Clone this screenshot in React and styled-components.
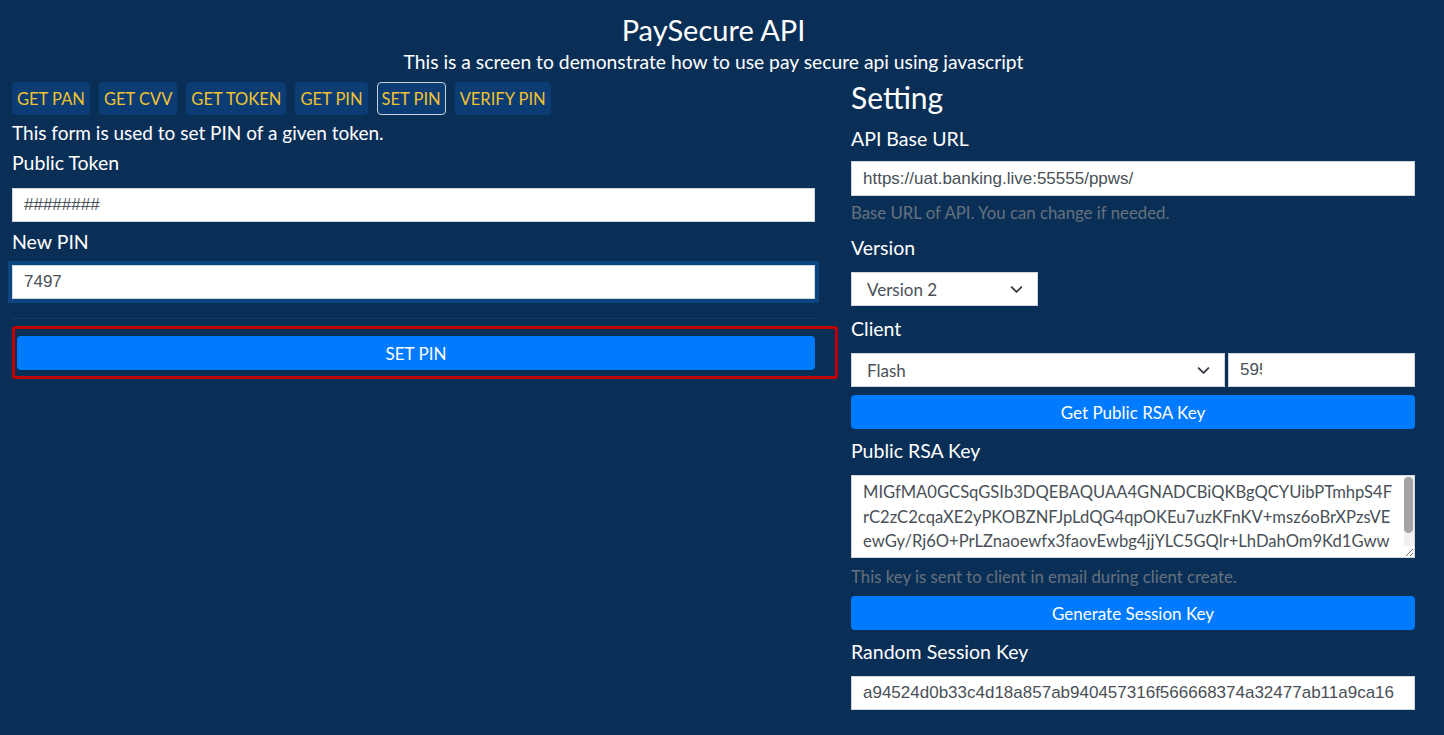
import styled, { createGlobalStyle } from 'styled-components';

const GlobalStyle = createGlobalStyle`
  html, body {
    margin: 0;
    background: #0a2f57;
  }
  body {
    color: #ffffff;
    font-family: Lato, "Noto Sans", sans-serif;
    font-size: 19px;
  }
  * { box-sizing: border-box; }
`

const Page = styled.div`
  min-height: 735px;
  background: #0a2f57;
  padding: 12px 29px 0 12px;
`

const Header = styled.header`
  text-align: center;
`

const Title = styled.h1`
  margin: 0;
  font-size: 29px;
  font-weight: 400;
  line-height: 36px;
`

const Subtitle = styled.p`
  margin: 2px 0 8px;
  font-size: 19.3px;
  line-height: 24px;
`

const Columns = styled.main`
  display: grid;
  grid-template-columns: 803px 1fr;
  column-gap: 36px;
  align-items: start;
`

const Column = styled.section`
  display: flex;
  flex-direction: column;
`

const Tabs = styled.nav`
  display: flex;
  gap: 9px;
`

const Tab = styled.button`
  height: 33px;
  padding: 0 4px;
  border: 1px solid ${p => (p.$active ? '#c9d2dd' : 'transparent')};
  border-radius: 4px;
  background: #0b3d74;
  color: #f1c232;
  font-family: Lato, "Noto Sans", sans-serif;
  font-size: 16.5px;
  cursor: pointer;
`

const Description = styled.p`
  margin: 6px 0 6px;
  line-height: 24px;
`

const Label = styled.label`
  display: block;
  margin-bottom: ${p => p.$mb ?? 11}px;
  font-size: 19.5px;
  line-height: 24px;
`

const TextInput = styled.input`
  display: block;
  width: ${p => p.$w ?? '100%'};
  height: ${p => p.$h ?? 34}px;
  margin-bottom: ${p => p.$mb ?? 11}px;
  padding: 0 ${p => p.$pr ?? 11}px 0 11px;
  border: 1px solid #cfd6de;
  border-radius: 0;
  background: #ffffff;
  color: #495057;
  font-family: "Liberation Sans", Arial, sans-serif;
  font-size: 17px;
  outline: none;
  box-shadow: ${p => (p.$focus ? '0 0 0 4px #0b447f' : 'none')};
`

const Divider = styled.hr`
  width: 100%;
  margin: 19px 0 7px;
  border: 0;
  border-top: 1px solid #133b66;
`

const Highlight = styled.div`
  width: 826px;
  padding: 7px 20px 6px 2px;
  border: 3px solid #c00000;
  border-radius: 3px;
`

const PrimaryButton = styled.button`
  display: block;
  width: 100%;
  height: 34px;
  margin-bottom: ${p => p.$mb ?? 0}px;
  border: 0;
  border-radius: 4px;
  background: #007bff;
  color: #ffffff;
  font-family: Lato, "Noto Sans", sans-serif;
  font-size: ${p => p.$fs ?? 17}px;
  cursor: pointer;
`

const Heading = styled.h2`
  margin: 0 0 15px;
  font-size: 30px;
  font-weight: 400;
  line-height: 30px;
`

const Help = styled.small`
  display: block;
  margin: ${p => p.$mt ?? 7}px 0 ${p => p.$mb ?? 13}px;
  color: #66717d;
  font-size: 16.8px;
  line-height: 20px;
`

const SelectWrap = styled.div`
  width: ${p => p.$w};
  flex: ${p => p.$flex ?? 'none'};
  height: 34px;
  margin-bottom: ${p => p.$mb ?? 0}px;
  background: #ffffff;
  border: 1px solid #cfd6de;
  display: flex;
  align-items: center;
  padding: 0 14px 0 15px;
  color: #495057;
  font-size: 17px;
`

const SelectText = styled.span`
  flex: 1;
`

const Chevron = styled.svg`
  width: 13px;
  height: 13px;
`

const ClientRow = styled.div`
  display: flex;
  gap: 3px;
  margin-bottom: 8px;
`

const KeyBox = styled.div`
  position: relative;
`

const KeyArea = styled.textarea`
  display: block;
  width: 100%;
  height: 83px;
  padding: 4px 10px 0 11px;
  border: 1px solid #cfd6de;
  border-radius: 0;
  background: #ffffff;
  color: #495057;
  font-family: Lato, "Noto Sans", sans-serif;
  font-size: 16.6px;
  line-height: 24.5px;
  resize: vertical;
  outline: none;
  overflow-y: hidden;
  word-break: break-all;
`

/* fake scrollbar drawn over the textarea (scrollbars are hidden in the renderer) */
const ScrollTrack = styled.div`
  position: absolute;
  top: 1px;
  right: 1px;
  width: 10px;
  height: 70px;
  background: #f1f1f1;
  pointer-events: none;
`

const ScrollThumb = styled.div`
  width: 9px;
  height: 56px;
  margin: 1px 0 0 0;
  border-radius: 5px;
  background: #a3a3a3;
`

const Select = ({ value, width, flex, mb }) => (
  <SelectWrap $w={width} $flex={flex} $mb={mb}>
    <SelectText>{value}</SelectText>
    <Chevron viewBox="0 0 16 16" fill="none" stroke="#343a40" strokeWidth="2.2" strokeLinecap="round" strokeLinejoin="round">
      <path d="M2 5l6 6 6-6" />
    </Chevron>
  </SelectWrap>
)

const tabs = ['GET PAN', 'GET CVV', 'GET TOKEN', 'GET PIN', 'SET PIN', 'VERIFY PIN'];

const rsaKey = [
  'MIGfMA0GCSqGSIb3DQEBAQUAA4GNADCBiQKBgQCYUibPTmhpS4F',
  'rC2zC2cqaXE2yPKOBZNFJpLdQG4qpOKEu7uzKFnKV+msz6oBrXPzsVE',
  'ewGy/Rj6O+PrLZnaoewfx3faovEwbg4jjYLC5GQlr+LhDahOm9Kd1Gww',
  'Ht4bW2LqEw1sM9xQ7pVnA3cYfKz0RkD8uTjPa5oXyLgN2IDAQAB',
].join('\n');

const App = () => (
  <Page>
    <GlobalStyle />
    <Header>
      <Title>PaySecure API</Title>
      <Subtitle>This is a screen to demonstrate how to use pay secure api using javascript</Subtitle>
    </Header>
    <Columns>
      <Column>
        <Tabs>
          {tabs.map(t => (
            <Tab key={t} $active={t === 'SET PIN'}>{t}</Tab>
          ))}
        </Tabs>
        <Description>This form is used to set PIN of a given token.</Description>
        <Label $mb={13}>Public Token</Label>
        <TextInput defaultValue="########" $mb={8} />
        <Label>New PIN</Label>
        <TextInput defaultValue="7497" $focus $mb={0} />
        <Divider />
        <Highlight>
          <PrimaryButton $fs={17}>SET PIN</PrimaryButton>
        </Highlight>
      </Column>
      <Column>
        <Heading>Setting</Heading>
        <Label $mb={10}>API Base URL</Label>
        <TextInput $h={35} $mb={0} defaultValue="https://uat.banking.live:55555/ppws/" />
        <Help>Base URL of API. You can change if needed.</Help>
        <Label $mb={12}>Version</Label>
        <Select value="Version 2" width="187px" mb={11} />
        <Label $mb={12}>Client</Label>
        <ClientRow>
          <Select value="Flash" flex="1" />
          <TextInput defaultValue="595" $w="187px" $pr={152} $mb={0} />
        </ClientRow>
        <PrimaryButton $mb={10}>Get Public RSA Key</PrimaryButton>
        <Label $mb={12}>Public RSA Key</Label>
        <KeyBox>
          <KeyArea defaultValue={rsaKey} />
          <ScrollTrack>
            <ScrollThumb />
          </ScrollTrack>
        </KeyBox>
        <Help $mt={9} $mb={9}>This key is sent to client in email during client create.</Help>
        <PrimaryButton $mb={10}>Generate Session Key</PrimaryButton>
        <Label $mb={12}>Random Session Key</Label>
        <TextInput defaultValue="a94524d0b33c4d18a857ab940457316f566668374a32477ab11a9ca16" />
      </Column>
    </Columns>
  </Page>
);

export default App;
